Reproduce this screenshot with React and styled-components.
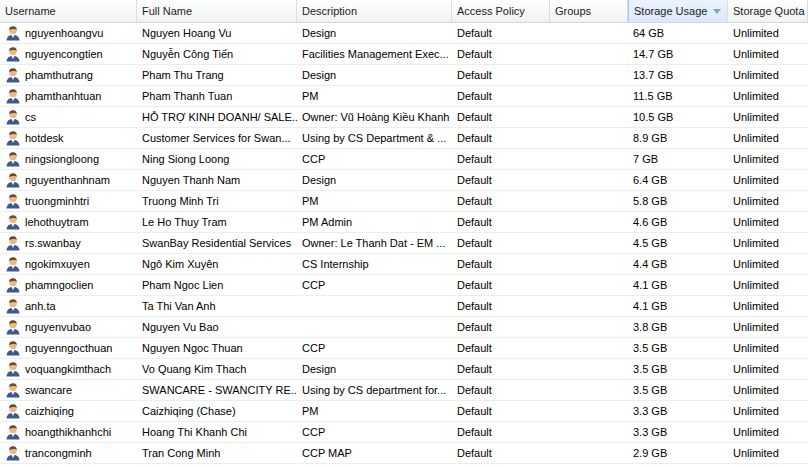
import styled, { createGlobalStyle } from 'styled-components';

const Global = createGlobalStyle`
  body { margin: 0; background: #fff; font-family: "Liberation Sans", Arial, sans-serif; }
`;

const cols = [137, 160, 155, 98, 78, 100, 80];
const grid = cols.map((c) => c + 'px').join(' ');

const rows = [
  ['nguyenhoangvu', 'Nguyen Hoang Vu', 'Design', '64 GB'],
  ['nguyencongtien', 'Nguyễn Công Tiến', 'Facilities Management Exec...', '14.7 GB'],
  ['phamthutrang', 'Pham Thu Trang', 'Design', '13.7 GB'],
  ['phamthanhtuan', 'Pham Thanh Tuan', 'PM', '11.5 GB'],
  ['cs', 'HỖ TRỢ KINH DOANH/ SALE...', 'Owner: Vũ Hoàng Kiều Khanh', '10.5 GB'],
  ['hotdesk', 'Customer Services for Swan...', 'Using by CS Department & ...', '8.9 GB'],
  ['ningsiongloong', 'Ning Siong Loong', 'CCP', '7 GB'],
  ['nguyenthanhnam', 'Nguyen Thanh Nam', 'Design', '6.4 GB'],
  ['truongminhtri', 'Truong Minh Tri', 'PM', '5.8 GB'],
  ['lehothuytram', 'Le Ho Thuy Tram', 'PM Admin', '4.6 GB'],
  ['rs.swanbay', 'SwanBay Residential Services', 'Owner: Le Thanh Dat - EM ...', '4.5 GB'],
  ['ngokimxuyen', 'Ngô Kim Xuyên', 'CS Internship', '4.4 GB'],
  ['phamngoclien', 'Pham Ngoc Lien', 'CCP', '4.1 GB'],
  ['anh.ta', 'Ta Thi Van Anh', '', '4.1 GB'],
  ['nguyenvubao', 'Nguyen Vu Bao', '', '3.8 GB'],
  ['nguyenngocthuan', 'Nguyen Ngoc Thuan', 'CCP', '3.5 GB'],
  ['voquangkimthach', 'Vo Quang Kim Thach', 'Design', '3.5 GB'],
  ['swancare', 'SWANCARE - SWANCITY RE...', 'Using by CS department for...', '3.5 GB'],
  ['caizhiqing', 'Caizhiqing (Chase)', 'PM', '3.3 GB'],
  ['hoangthikhanhchi', 'Hoang Thi Khanh Chi', 'CCP', '3.3 GB'],
  ['trancongminh', 'Tran Cong Minh', 'CCP MAP', '2.9 GB'],
];

const headers = ['Username', 'Full Name', 'Description', 'Access Policy', 'Groups', 'Storage Usage', 'Storage Quota'];

function UserIcon() {
  return (
    <svg width="16" height="16" viewBox="0 0 16 16">
      <path d="M1.5 15.5 C2 11.5 4 10 8 10 C12 10 14 11.5 14.5 15.5 Z" fill="#3a5a8c" />
      <path d="M6.5 10 L8 13 L9.5 10 Z" fill="#fff" />
      <circle cx="8" cy="5.5" r="3.8" fill="#e9b98a" />
      <path d="M4.2 5 C4.2 2 6 1.2 8 1.2 C10.5 1.2 11.8 2.6 11.8 5 C10.5 3.5 7 3.8 4.2 5 Z" fill="#6b4a2a" />
    </svg>
  );
}

function Arrow() {
  return (
    <svg width="8" height="5" viewBox="0 0 8 5">
      <path d="M0 0 H8 L4 5 Z" fill="#8aa0bd" />
    </svg>
  );
}

export default function App() {
  return (
    <>
      <Global />
      <Table>
        <HeadRow>
          {headers.map((h, i) => (
            <HeadCell key={h} $sorted={i === 5}>
              {h}
              {i === 5 && <Arrow />}
            </HeadCell>
          ))}
        </HeadRow>
        {rows.map((r) => (
          <Row key={r[0]}>
            <Cell>
              <UserIcon />
              {r[0]}
            </Cell>
            <Cell>{r[1]}</Cell>
            <Cell>{r[2]}</Cell>
            <Cell>Default</Cell>
            <Cell />
            <Cell>{r[3]}</Cell>
            <Cell>Unlimited</Cell>
          </Row>
        ))}
      </Table>
    </>
  );
}

const Table = styled.div`
  width: 808px;
  height: 467px;
  overflow: hidden;
  font-size: 11px;
  color: #000;
`;

const HeadRow = styled.div`
  display: grid;
  grid-template-columns: ${grid};
  height: 22px;
  background: linear-gradient(#ffffff, #f1f2f4);
  border-bottom: 1px solid #d5d5d5;
`;

const HeadCell = styled.div`
  display: flex;
  align-items: center;
  gap: 6px;
  padding: 0 5px;
  white-space: nowrap;
  overflow: hidden;
  color: #222;
  border-right: 1px solid #dedede;
  background: ${(p) => (p.$sorted ? 'linear-gradient(#eaf3fd, #d9e9fb)' : 'transparent')};
  border-left: ${(p) => (p.$sorted ? '1px solid #aac8ea' : 'none')};
`;

const Row = styled.div`
  display: grid;
  grid-template-columns: ${grid};
  height: 20px;
  border-bottom: 1px solid #ededed;
`;

const Cell = styled.div`
  display: flex;
  align-items: center;
  gap: 4px;
  padding: 0 5px;
  white-space: nowrap;
  overflow: hidden;
  svg { flex: none; }
`;
